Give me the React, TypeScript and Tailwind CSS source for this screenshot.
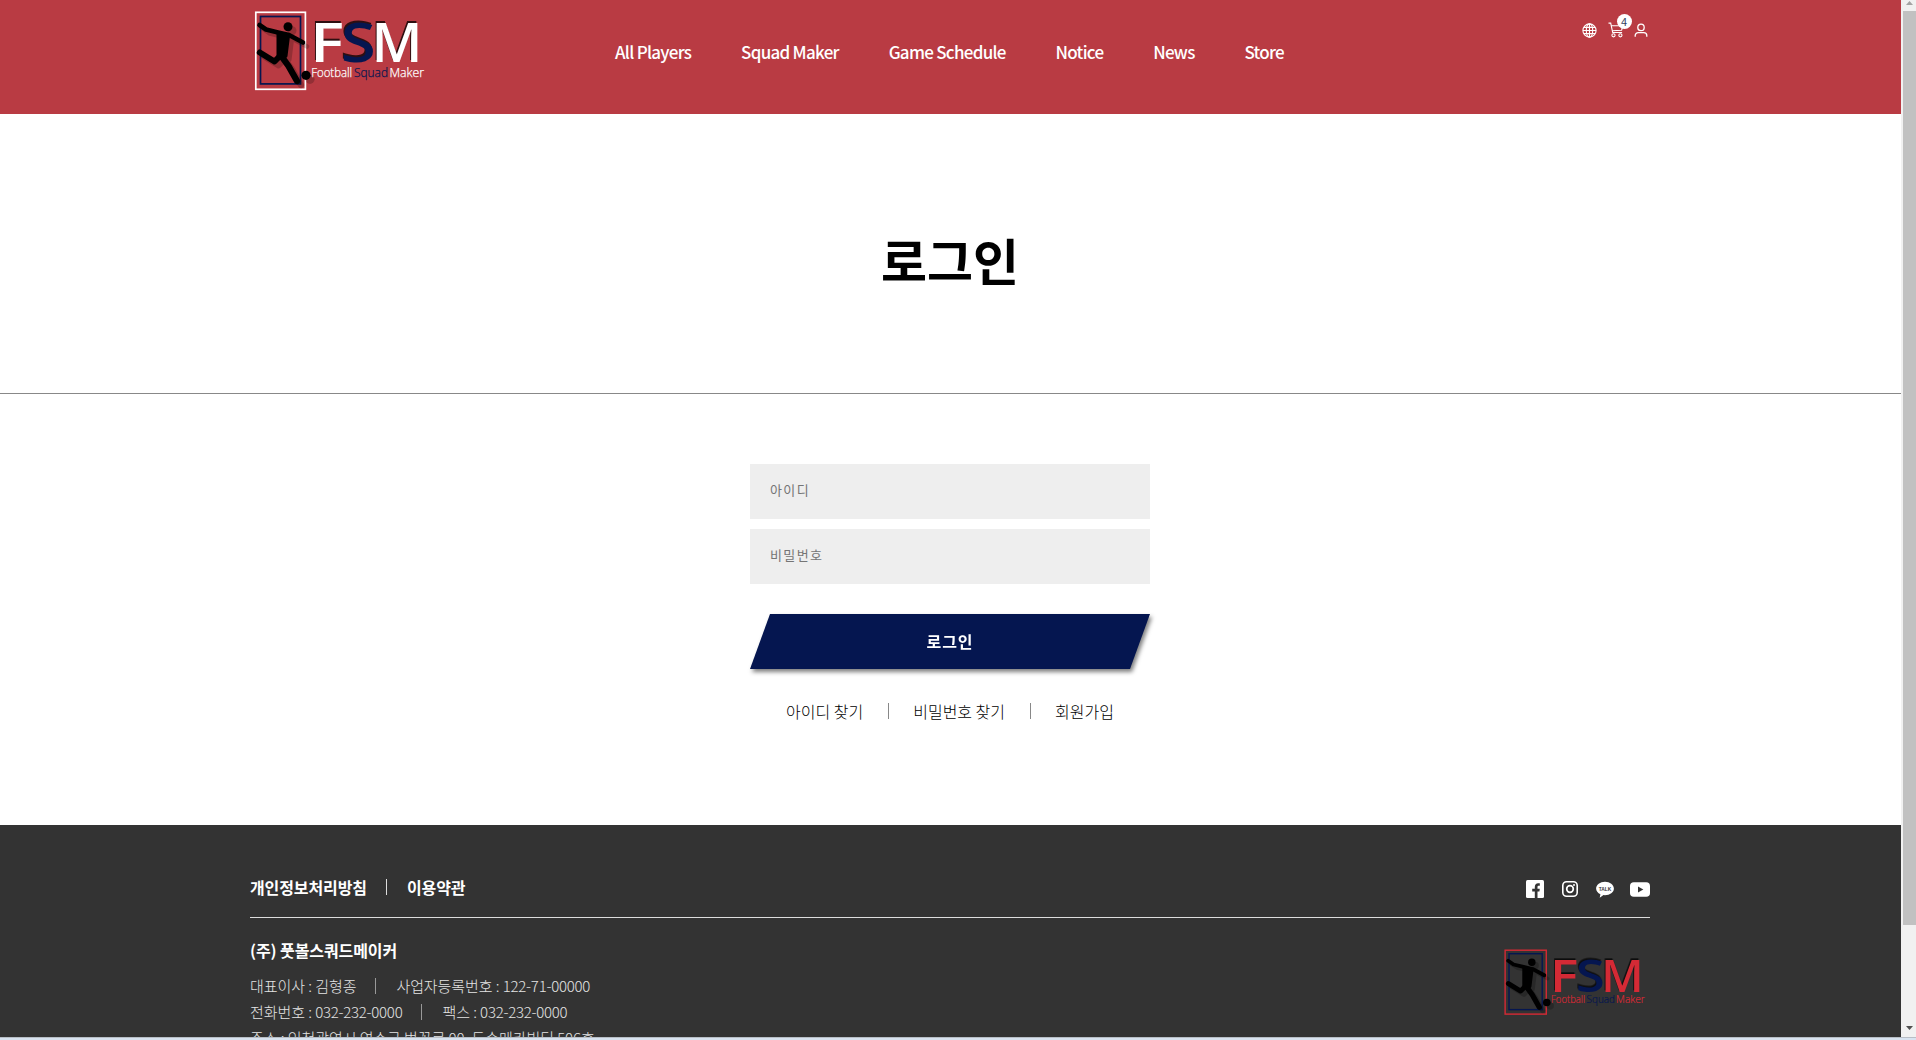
type LogoProps = { main: string; navy: string; className: string };

function Logo({ main, navy, className }: LogoProps) {
  return (
    <svg viewBox="0 0 180 100" className={className} fontFamily="'Open Sans', sans-serif">
      <rect x="5.8" y="12.3" width="49.6" height="77" fill="none" stroke={main} strokeWidth="1.7" />
      <rect x="10.5" y="16.5" width="40" height="67.4" fill="none" stroke={navy} strokeWidth="1.7" />
      <g transform="translate(4 4)" opacity="0.2">
        <Player />
      </g>
      <Player />
      <g fontSize="55" fontWeight="600" className="[filter:drop-shadow(-0.5px_-1.1px_0_rgba(0,0,0,0.75))]">
        <text x="60" y="62.3" textLength="34" lengthAdjust="spacingAndGlyphs" fill={main}>F</text>
        <text x="90.8" y="62.3" textLength="35" lengthAdjust="spacingAndGlyphs" fill={navy}>S</text>
        <text x="121.6" y="62.3" textLength="51" lengthAdjust="spacingAndGlyphs" fill={main}>M</text>
      </g>
      <g fontSize="12.5" fontWeight="300" strokeWidth="0.25">
        <text x="61.2" y="76.5" textLength="41" lengthAdjust="spacingAndGlyphs" fill={main} stroke={main}>Football</text>
        <text x="104" y="76.5" textLength="34" lengthAdjust="spacingAndGlyphs" fill={navy} stroke={navy}>Squad</text>
        <text x="139.5" y="76.5" textLength="34.6" lengthAdjust="spacingAndGlyphs" fill={main} stroke={main}>Maker</text>
      </g>
    </svg>
  );
}

function Player() {
  return (
    <g stroke="#000" fill="none" strokeLinecap="round" strokeLinejoin="round">
      <circle cx="38" cy="26.7" r="4.5" fill="#000" stroke="none" />
      <circle cx="56" cy="75.3" r="4.6" fill="#000" stroke="none" />
      <path d="M9.5 25 16 29.5 28 32.5 39 35 53 42.5" strokeWidth="4.6" />
      <path d="M28.5 34 38 36 35.5 56 28.5 56Z" fill="#000" strokeWidth="4" />
      <path d="M30 56 24.5 61.5 9.8 52.5" strokeWidth="6" />
      <path d="M32 57 38.5 66 47 81" strokeWidth="6.4" />
    </g>
  );
}

const nav = ["All Players", "Squad Maker", "Game Schedule", "Notice", "News", "Store"];

function Bar({ className }: { className: string }) {
  return <span className={`w-px h-4 shrink-0 ${className}`} />;
}

export default function App() {
  return (
    <div className="flex h-[1040px] w-[1916px] flex-col overflow-hidden bg-white font-['Noto_Sans_CJK_KR',sans-serif]">
      <div className="flex h-[1037px] shrink-0">
        <div className="flex w-[1901px] shrink-0 flex-col overflow-hidden">
          <header className="h-[114px] shrink-0 bg-[#b93b43]">
            <div className="ml-[250px] flex w-[1400px] items-start">
              <Logo main="#fff" navy="#051650" className="h-[100px] w-[180px]" />
              <nav className="ml-[185px] mt-[38px] flex gap-[49.8px] text-[17px] leading-7 font-medium tracking-[-0.72px] text-white">
                {nav.map((n) => (
                  <a key={n} className="whitespace-nowrap">{n}</a>
                ))}
              </nav>
              <div className="mt-[22px] mr-[2px] ml-auto flex items-center gap-[10.5px] text-white">
                <svg viewBox="0 0 15 15" className="size-[15px]" fill="none" stroke="currentColor" strokeWidth="1.1">
                  <circle cx="7.5" cy="7.5" r="6.6" />
                  <ellipse cx="7.5" cy="7.5" rx="3.2" ry="6.6" />
                  <path d="M7.5 1v13M1 7.5h13M1.8 4.4h11.4M1.8 10.6h11.4" />
                </svg>
                <div className="relative">
                  <svg viewBox="0 0 16 16" className="size-4" fill="none" stroke="currentColor" strokeWidth="1.1">
                    <path d="M.5 1.1h2.2l2 9.4h9.4M3.3 3.7h11.6l-1.3 4.5-9.3.5" />
                    <circle cx="5.5" cy="13.3" r="1.6" />
                    <circle cx="12.4" cy="13.3" r="1.6" />
                  </svg>
                  <span className="absolute -top-[8px] left-[9px] flex size-[15px] items-center justify-center rounded-full bg-white text-[11px] leading-none text-[#333f60]">4</span>
                </div>
                <svg viewBox="0 0 14 15" className="h-[15px] w-[14px]" fill="none" stroke="currentColor" strokeWidth="1.3">
                  <circle cx="7" cy="4.4" r="3.2" />
                  <path d="M1.2 13.8v-1.2a3 3 0 0 1 3-3h5.6a3 3 0 0 1 3 3v1.2" />
                </svg>
              </div>
            </div>
          </header>

          <section className="flex h-[280px] shrink-0 items-center justify-center border-b border-[#888]">
            <h1 className="mt-[10px] mr-px text-[50px] leading-none font-bold text-black">로그인</h1>
          </section>

          <main className="h-[431px] shrink-0 pt-[70px]">
            <form className="ml-[750px] flex w-[400px] flex-col">
              <input placeholder="아이디" className="h-[55px] bg-[#eee] px-5 pb-[5px] text-[13px] tracking-[1.4px] placeholder:text-[#757575]" />
              <input placeholder="비밀번호" className="mt-[10px] h-[55px] bg-[#eee] px-5 pb-[5px] text-[13px] tracking-[1.4px] placeholder:text-[#757575]" />
              <div className="mt-[30px] drop-shadow-[2px_3px_2px_rgba(0,0,0,0.5)]">
                <button type="button" className="h-[55px] w-full bg-[#051650] pb-[2px] text-[16px] font-bold tracking-[1px] text-white [clip-path:polygon(5%_0,100%_0,95%_100%,0_100%)]">
                  로그인
                </button>
              </div>
            </form>
            <div className="mt-[30px] mr-px flex items-center justify-center text-[16px] leading-6 font-light text-black">
              <a>아이디 찾기</a>
              <Bar className="mx-[24.5px] bg-[#888]" />
              <a>비밀번호 찾기</a>
              <Bar className="mx-[24.5px] bg-[#888]" />
              <a>회원가입</a>
            </div>
          </main>

          <footer className="grow bg-[#333] pt-[50px] text-white">
            <div className="ml-[250px] w-[1400px]">
              <div className="flex h-[43px] items-start justify-between border-b border-[#ddd]">
                <div className="-mt-px flex items-center text-[16px] leading-[26px] font-bold tracking-[-0.1px]">
                  <a>개인정보처리방침</a>
                  <Bar className="mr-5 ml-[19px] bg-[#ddd]" />
                  <a>이용약관</a>
                </div>
                <div className="mt-[5px] flex items-center">
                  <svg viewBox="0 0 18 18" className="size-[18px]">
                    <rect width="18" height="18" rx="1.5" fill="#fff" />
                    <path d="M8.8 18v-6.5H6.2V8.7h2.6V7c0-2.3 1.3-3.7 3.3-3.7h1.7v2.4h-1.1c-.8 0-1.2.4-1.2 1.2v1.8h2.3l-.4 2.8h-1.9V18z" fill="#333" />
                  </svg>
                  <svg viewBox="0 0 16 16" className="ml-[18px] size-4" fill="none" stroke="#fff">
                    <rect x=".8" y=".8" width="14.4" height="14.4" rx="3.8" strokeWidth="1.6" />
                    <circle cx="8" cy="8" r="3.3" strokeWidth="1.7" />
                    <circle cx="12" cy="4" r="1" fill="#fff" stroke="none" />
                  </svg>
                  <svg viewBox="0 0 18 17" className="ml-[18px] h-[17px] w-[18px]">
                    <path d="M9 .7c4.9 0 8.9 3 8.9 6.8S13.9 14.2 9 14.2l-1.5-.1-3.8 2.6.7-3.5C1.8 12 .1 9.9.1 7.5.1 3.7 4.1.7 9 .7z" fill="#fff" />
                    <text x="2.7" y="9.7" fontFamily="Liberation Sans, sans-serif" fontWeight="700" fontSize="5.7" textLength="12.6" lengthAdjust="spacingAndGlyphs" fill="#333">TALK</text>
                  </svg>
                  <svg viewBox="0 0 20 15" className="ml-4 h-[15px] w-5">
                    <rect width="20" height="14.5" y=".2" rx="3.8" fill="#fff" />
                    <path d="M8 4.5 13.3 7.5 8 10.5z" fill="#333" />
                  </svg>
                </div>
              </div>
              <div className="flex items-start justify-between">
                <div className="pt-[19px]">
                  <p className="text-[16px] leading-[26px] font-bold tracking-[-0.1px]">(주) 풋볼스쿼드메이커</p>
                  <div className="mt-[10px] text-[15px] leading-[26px] font-light tracking-[-0.06px] text-[#e4e4e4]">
                    <p className="flex items-center">
                      대표이사 : 김형종
                      <Bar className="mr-5 ml-[19px] bg-[#999]" />
                      <span>사업자등록번호 : <span className="tracking-[-0.25px]">122-71-00000</span></span>
                    </p>
                    <p className="flex items-center">
                      <span>전화번호 : <span className="tracking-[-0.25px]">032-232-0000</span></span>
                      <Bar className="mr-5 ml-[19px] bg-[#999]" />
                      <span>팩스 : <span className="tracking-[-0.25px]">032-232-0000</span></span>
                    </p>
                    <p>주소 : 인천광역시 연수구 벚꽃로 00, 두손메카빌딩 506호</p>
                  </div>
                </div>
                <Logo main="#d42a35" navy="#051650" className="mt-[22px] h-[83px] w-[150px]" />
              </div>
            </div>
          </footer>
        </div>

        <div className="flex w-[15px] flex-col items-end bg-[#f1f1f1]">
          <div className="flex h-[11px] w-[13px] items-start justify-center pt-px">
            <svg viewBox="0 0 7 4" className="h-1 w-[7px]"><path d="M3.5 0 7 4H0z" fill="#a3a3a3" /></svg>
          </div>
          <div className="h-[914px] w-[13px] bg-[#c1c1c1]" />
          <div className="mt-auto flex h-[11px] w-[13px] items-start justify-center">
            <svg viewBox="0 0 7 4" className="h-1 w-[7px]"><path d="M0 0h7L3.5 4z" fill="#505050" /></svg>
          </div>
        </div>
      </div>
      <div className="h-px shrink-0 bg-[#b8bec6]" />
      <div className="h-[2px] shrink-0 bg-[#d8e3f0]" />
    </div>
  );
}
